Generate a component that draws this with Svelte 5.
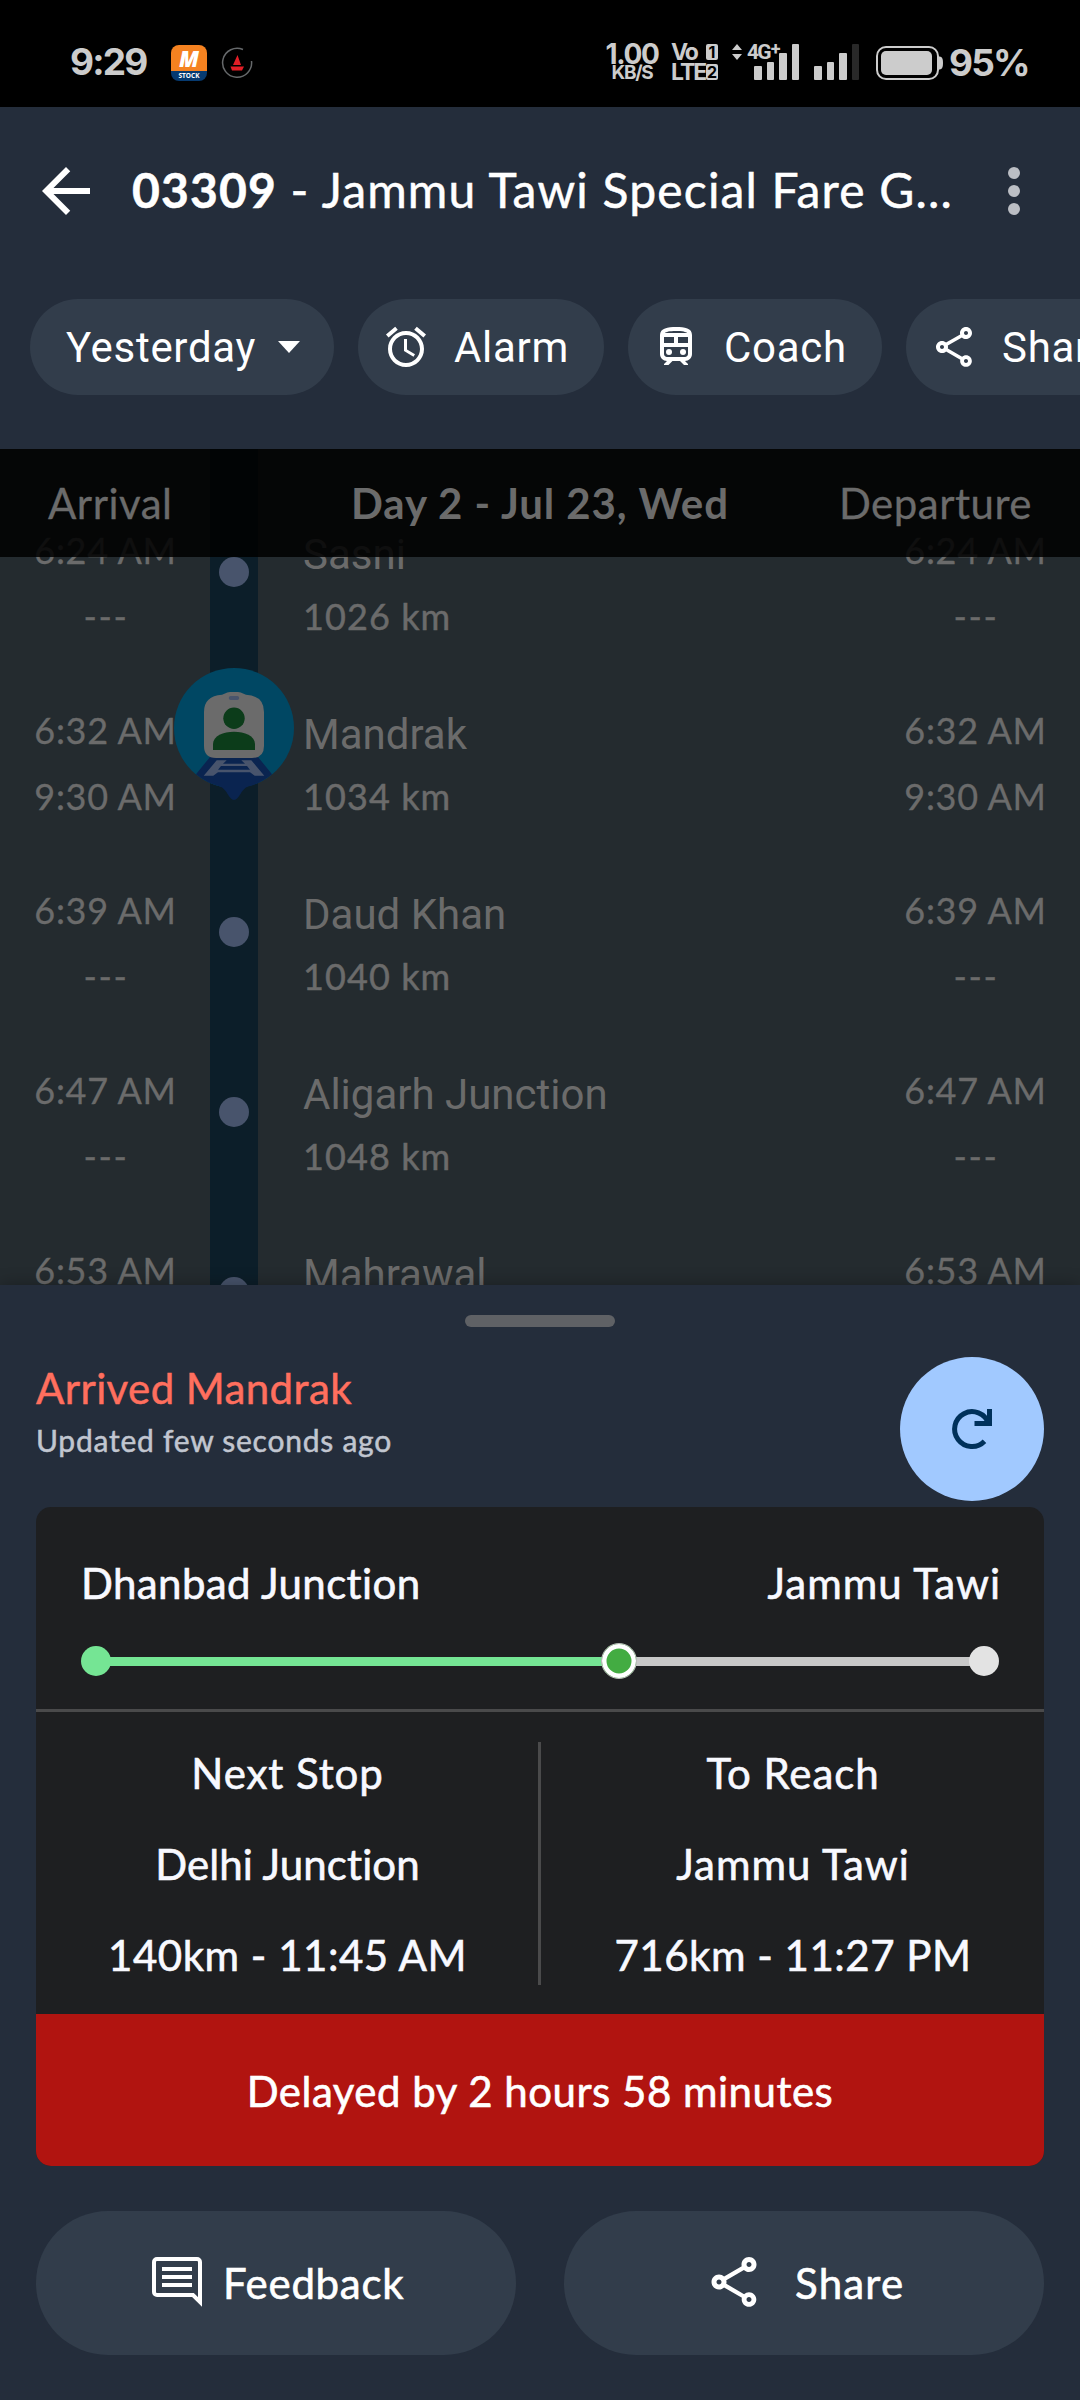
<script lang="ts">
	type Stop = {
		name: string;
		km: number;
		scheduled: string;
		actual: string;
		current?: boolean;
	};

	let stops = $state<Stop[]>([
		{ name: 'Sasni', km: 1026, scheduled: '6:24 AM', actual: '---' },
		{ name: 'Mandrak', km: 1034, scheduled: '6:32 AM', actual: '9:30 AM', current: true },
		{ name: 'Daud Khan', km: 1040, scheduled: '6:39 AM', actual: '---' },
		{ name: 'Aligarh Junction', km: 1048, scheduled: '6:47 AM', actual: '---' },
		{ name: 'Mahrawal', km: 1056, scheduled: '6:53 AM', actual: '---' }
	]);

	let progress = $state(58.95);
	const strengths = [14, 18, 27, 36];
</script>

{#snippet shareIcon(size: number)}
	<svg width={size} height={size} viewBox="0 0 24 24" fill="#fff">
		<path
			d="M18 16.08c-.76 0-1.44.3-1.96.77L8.91 12.7c.05-.23.09-.46.09-.7s-.04-.47-.09-.7l7.05-4.11c.54.5 1.25.81 2.04.81 1.66 0 3-1.34 3-3s-1.34-3-3-3-3 1.34-3 3c0 .24.04.47.09.7L8.04 9.81C7.5 9.31 6.79 9 6 9c-1.66 0-3 1.34-3 3s1.34 3 3 3c.79 0 1.5-.31 2.04-.81l7.12 4.16c-.05.21-.08.43-.08.65 0 1.61 1.31 2.92 2.92 2.92s2.92-1.31 2.92-2.92-1.31-2.92-2.92-2.92zM18 4c.55 0 1 .45 1 1s-.45 1-1 1-1-.45-1-1 .45-1 1-1zM6 13c-.55 0-1-.45-1-1s.45-1 1-1 1 .45 1 1-.45 1-1 1zm12 7.02c-.55 0-1-.45-1-1s.45-1 1-1 1 .45 1 1-.45 1-1 1z"
		/>
	</svg>
{/snippet}

{#snippet bars(lit: number)}
	<div class="bars">
		{#each strengths as h, i}
			<i class:off={i >= lit} style="height: {h}px"></i>
		{/each}
	</div>
{/snippet}

<main>
	<div class="status">
		<span class="clock">9:29</span>
		<div class="stock">
			<b>M</b>
			<small>STOCK</small>
		</div>
		<svg class="boat" width="32" height="32" viewBox="0 0 32 32">
			<path
				d="M22 2.5A14.5 14.5 0 1 0 30.5 14"
				fill="none"
				stroke="#66696b"
				stroke-width="1.5"
			/>
			<path d="M16.5 8 20 18h-8zM9.5 19.5h13.5l-2 4H11z" fill="#e31e26" />
		</svg>
		<div class="speed">
			<b>1.00</b>
			<small>KB/S</small>
		</div>
		<div class="volte">
			<div><b>Vo</b><em>1</em></div>
			<div><b>LTE</b><em>2</em></div>
		</div>
		<div class="mobile">
			<div class="network">
				<svg width="10" height="16" viewBox="0 0 10 16" fill="#ccc">
					<path d="M5 0l5 6H0zM5 16l5-6H0z" />
				</svg>
				<span>4G<sup>+</sup></span>
			</div>
			{@render bars(4)}
		</div>
		{@render bars(3)}
		<svg class="battery" width="68" height="34" viewBox="0 0 68 34">
			<rect x="1" y="1" width="61" height="32" rx="9" fill="none" stroke="#ccc" stroke-width="2" />
			<rect x="5" y="5" width="51" height="24" rx="5" fill="#ccc" />
			<path d="M63 10.5c3 0 4 2 4 6.500s-1 6.500-4 6.500z" fill="#ccc" />
		</svg>
		<span class="percent">95%</span>
	</div>

	<header>
		<div class="toolbar">
			<svg width="72" height="72" viewBox="0 0 24 24" fill="#fff">
				<path d="M20 11H7.83l5.59-5.59L12 4l-8 8 8 8 1.41-1.41L7.83 13H20v-2z" />
			</svg>
			<h1><b>03309</b> - Jammu Tawi Special Fare G...</h1>
			<svg width="72" height="72" viewBox="0 0 24 24" fill="#bbbec4">
				<circle cx="12" cy="6" r="2" />
				<circle cx="12" cy="12" r="2" />
				<circle cx="12" cy="18" r="2" />
			</svg>
		</div>

		<div class="chips">
			<button class="chip day">
				Yesterday
				<svg width="22" height="12" viewBox="0 0 22 12" fill="#fff"><path d="M0 0h22L11 12z" /></svg>
			</button>
			<button class="chip alarm">
				<svg width="48" height="48" viewBox="0 0 24 24" fill="#fff">
					<path
						d="M22 5.72l-4.6-3.86-1.29 1.53 4.6 3.86L22 5.72zM7.88 3.39L6.6 1.86 2 5.71l1.29 1.53 4.59-3.85zM12.5 8H11v6l4.75 2.85.75-1.23-4-2.37V8zM12 4c-4.97 0-9 4.03-9 9s4.02 9 9 9c4.97 0 9-4.03 9-9s-4.03-9-9-9zm0 16c-3.87 0-7-3.13-7-7s3.13-7 7-7 7 3.13 7 7-3.13 7-7 7z"
					/>
				</svg>
				Alarm
			</button>
			<button class="chip coach">
				<svg width="48" height="48" viewBox="0 0 24 24" fill="#fff">
					<path
						d="M12 2c-4 0-8 .5-8 4v9.5C4 17.43 5.57 19 7.5 19L6 20.5v.5h2.23l2-2H14l2 2h2v-.5L16.5 19c1.93 0 3.5-1.57 3.5-3.5V6c0-3.5-3.58-4-8-4zm0 2c3.51 0 4.96.48 5.57 1H6.43c.61-.52 2.06-1 5.57-1zM6 7h5v3H6V7zm12 8.5c0 .83-.67 1.5-1.5 1.5h-9c-.83 0-1.5-.67-1.5-1.5V12h12v3.5zM18 10h-5V7h5v3z"
					/>
					<circle cx="8.5" cy="14.5" r="1.5" />
					<circle cx="15.5" cy="14.5" r="1.5" />
				</svg>
				Coach
			</button>
			<button class="chip">
				{@render shareIcon(48)}
				Share
			</button>
		</div>
	</header>

	<section class="timeline">
		{#each stops as stop}
			<div class="stop">
				<div class="times">
					<span>{stop.scheduled}</span>
					<span class:dash={stop.actual === '---'}>{stop.actual}</span>
				</div>
				<div class="rail">
					{#if stop.current}
						<svg class="marker" width="120" height="132" viewBox="0 0 120 132">
							<circle cx="60" cy="60" r="60" fill="#004763" />
							<path
								d="M36 89H84L98 106.3A60 60 0 0 1 74 118.5C67 121 65 132 60 132S53 121 46 118.5A60 60 0 0 1 22 106.3z"
								fill="#0a2450"
							/>
							<path
								d="M42.7 92.3H52.7L49 95.7H71L67.3 92.3H77.3L90.3 107.7H80.7L76 104.3H44L39.3 107.7H29.7zM47 98L44 101.7H76L73 98z"
								fill="#48546c"
								fill-rule="evenodd"
							/>
							<path
								d="M51 25.5Q53 24 56 24H64Q67 24 69 25.5L72 26.8Q90 28 90 44V78Q90 90 78 90H42Q30 90 30 78V44Q30 28 48 26.8z"
								fill="#6b6b6b"
							/>
							<rect x="54.8" y="28" width="10.4" height="4" rx="2" fill="#48546c" />
							<circle cx="60" cy="50.3" r="10.7" fill="#0c3c1a" />
							<path d="M39 82V76C39 59.5 81 59.5 81 76V82z" fill="#0c3c1a" />
						</svg>
					{:else}
						<i class="dot"></i>
					{/if}
				</div>
				<div class="station">
					<span class="name">{stop.name}</span>
					<span class="km">{stop.km} km</span>
				</div>
				<div class="times">
					<span>{stop.scheduled}</span>
					<span class:dash={stop.actual === '---'}>{stop.actual}</span>
				</div>
			</div>
		{/each}

		<div class="columns">
			<span class="arrival">Arrival</span>
			<b>Day 2 - Jul 23, Wed</b>
			<span class="departure">Departure</span>
		</div>
	</section>

	<section class="sheet">
		<div class="handle"></div>

		<div class="summary">
			<div>
				<h2>Arrived Mandrak</h2>
				<p>Updated few seconds ago</p>
			</div>
			<button class="refresh" aria-label="Refresh">
				<svg width="60" height="60" viewBox="0 0 60 60" fill="none" stroke="#00315b" stroke-width="5">
					<path d="M42.5 42.2A17.4 17.4 0 1 1 46.5 24.5" />
					<path d="M47.5 10V24.5H32.5" />
				</svg>
			</button>
		</div>

		<div class="card">
			<div class="route">
				<span class="from">Dhanbad Junction</span>
				<span class="to">Jammu Tawi</span>
			</div>
			<div class="track">
				<i class="line done" style="width: {progress}%"></i>
				<i class="line"></i>
				<i class="end start"></i>
				<i class="thumb" style="left: {progress}%"></i>
				<i class="end finish"></i>
			</div>
			<div class="stats">
				<div>
					<span class="label">Next Stop</span>
					<span class="next">Delhi Junction</span>
					<span>140km - 11:45 AM</span>
				</div>
				<i></i>
				<div>
					<span class="label">To Reach</span>
					<span class="to">Jammu Tawi</span>
					<span>716km - 11:27 PM</span>
				</div>
			</div>
			<div class="delay">Delayed by 2 hours 58 minutes</div>
		</div>

		<div class="actions">
			<button class="feedback">
				<svg width="50" height="50" viewBox="0 0 50 50" fill="none" stroke="#fff" stroke-width="4">
					<path d="M2 5a3 3 0 0 1 3-3h40a3 3 0 0 1 3 3v40l-7-7H5a3 3 0 0 1-3-3z" />
					<path d="M10 12h30M10 20h30M10 28h30" />
				</svg>
				Feedback
			</button>
			<button class="share">
				{@render shareIcon(60)}
				Share
			</button>
		</div>
	</section>
</main>

<style>
	:global(body) {
		background: #242d3b;
	}

	main {
		width: 1080px;
		height: 2400px;
		overflow: hidden;
		display: flex;
		flex-direction: column;
		background: #242d3b;
		color: #fff;
		font-family: Lato, 'Noto Sans', sans-serif;
		font-size: 42px;
		white-space: nowrap;
	}

	h1,
	h2,
	p {
		margin: 0;
		font-weight: 400;
	}

	i,
	em {
		font-style: normal;
	}

	svg {
		display: block;
		flex: none;
	}

	button {
		border: 0;
		padding: 0;
		color: #fff;
		font-family: inherit;
		font-size: 42px;
	}

	/* status bar */

	.status {
		flex: none;
		height: 107px;
		box-sizing: border-box;
		padding: 44px 0 0 70px;
		display: flex;
		align-items: flex-start;
		background: #000;
		color: #ccc;
		font-family: Inter, Roboto, sans-serif;
	}

	.clock {
		width: 101px;
		font-size: 37px;
		font-weight: 700;
		line-height: 36px;
		letter-spacing: -1.8px;
	}

	.stock {
		width: 36px;
		height: 36px;
		margin-top: 1px;
		border-radius: 8px;
		background: linear-gradient(#f58220 26px, #063a70 26px);
		color: #fff;
		text-align: center;
	}

	.stock b {
		display: block;
		font: italic 900 22px/27px 'Open Sans', sans-serif;
	}

	.stock small {
		display: block;
		font: 700 6.5px/8px 'Open Sans', sans-serif;
	}

	.boat {
		margin: 3px 0 0 14px;
	}

	.speed {
		width: 56px;
		margin-left: 351px;
		text-align: center;
	}

	.speed b {
		display: block;
		font-size: 28px;
		font-weight: 700;
		line-height: 20px;
		letter-spacing: -1.3px;
	}

	.speed small {
		display: block;
		font-size: 19px;
		font-weight: 700;
		line-height: 18px;
		letter-spacing: -1.3px;
	}

	.volte {
		width: 47px;
		margin-left: 11px;
	}

	.volte div {
		display: flex;
		justify-content: space-between;
		height: 20px;
		font-size: 23px;
		line-height: 17px;
		letter-spacing: -2px;
	}

	.volte em {
		width: 12px;
		height: 16px;
		border-radius: 2px;
		background: #ccc;
		color: #000;
		font-size: 16px;
		font-weight: 700;
		line-height: 16px;
		text-align: center;
		letter-spacing: 0;
	}

	.mobile {
		position: relative;
		width: 67px;
		margin-left: 14px;
		display: flex;
		justify-content: flex-end;
	}

	.network {
		position: absolute;
		left: 0;
		top: 0;
		display: flex;
		gap: 5px;
		font-family: Roboto, sans-serif;
		font-size: 21px;
		font-weight: 700;
		line-height: 17px;
		letter-spacing: -1.8px;
	}

	.network sup {
		font-size: 18px;
		line-height: 0;
		vertical-align: 4px;
		margin-left: 1px;
	}

	.bars {
		display: flex;
		align-items: flex-end;
		gap: 5px;
		height: 36px;
	}

	.bars i {
		width: 7.5px;
		border-radius: 1px;
		background: #ccc;
	}

	.bars .off {
		background: #292929;
	}

	.mobile + .bars {
		margin-left: 15px;
	}

	.battery {
		margin: 2px 0 0 17px;
	}

	.percent {
		margin-left: 5px;
		font-size: 37px;
		font-weight: 700;
		line-height: 38px;
		letter-spacing: -1.8px;
	}

	/* header */

	header {
		flex: none;
		height: 342px;
	}

	.toolbar {
		display: flex;
		align-items: center;
		padding: 48px 30px 0;
	}

	h1 {
		width: 846px;
		margin-left: 30px;
		font-size: 48px;
		line-height: 66px;
		margin-bottom: 2px;
		letter-spacing: 1.18px;
		-webkit-text-stroke: 0.5px;
	}

	.chips {
		display: flex;
		gap: 24px;
		margin: 72px 0 0 30px;
	}

	.chip {
		flex: none;
		box-sizing: border-box;
		height: 96px;
		width: 254px;
		padding-left: 24px;
		border-radius: 48px;
		background: #323d4b;
		display: flex;
		align-items: center;
		gap: 24px;
		font-family: Roboto, sans-serif;
		letter-spacing: 0.7px;
	}

	.day {
		width: 304px;
		padding-left: 36px;
		gap: 22px;
	}

	.alarm {
		width: 246px;
	}

	/* stop list */

	.timeline {
		position: relative;
		flex: none;
		height: 836px;
		box-sizing: border-box;
		padding-top: 54px;
		overflow: hidden;
		color: #6b6b6b;
		background: linear-gradient(90deg, #242b2f 210px, #0c1e29 210px, #0c1e29 258px, #242b2f 258px);
	}

	.stop {
		display: grid;
		grid-template-columns: 210px 48px 1fr 210px;
		height: 180px;
	}

	.times {
		display: flex;
		flex-direction: column;
		align-items: center;
		padding: 14px 0 0 1px;
		font-size: 36px;
		line-height: 66px;
		letter-spacing: 0.7px;
		-webkit-text-stroke: 0.3px;
	}

	.times .dash {
		padding-left: 1px;
		letter-spacing: 1.7px;
	}

	.rail {
		position: relative;
		display: flex;
		justify-content: center;
		align-items: flex-start;
	}

	.dot {
		width: 30px;
		height: 30px;
		margin-top: 54px;
		border-radius: 50%;
		background: #48546c;
	}

	.marker {
		position: absolute;
		top: -15px;
		left: -36px;
	}

	.station {
		display: flex;
		flex-direction: column;
		padding: 22px 0 0 45px;
		line-height: 60px;
	}

	.name {
		font-family: Roboto, sans-serif;
	}

	.km {
		padding-top: 1px;
		font-size: 36px;
		letter-spacing: 1.1px;
		-webkit-text-stroke: 0.5px;
	}

	.columns {
		position: absolute;
		inset: 0 0 auto;
		height: 108px;
		box-sizing: border-box;
		padding: 0 48px;
		display: grid;
		grid-template-columns: 1fr auto 1fr;
		background: rgba(0, 0, 0, 0.86);
		line-height: 108px;
		letter-spacing: 0.5px;
		-webkit-text-stroke: 0.3px;
	}

	.columns b {
		letter-spacing: 0.9px;
		-webkit-text-stroke: 0;
	}

	.departure {
		text-align: right;
	}

	/* bottom sheet */

	.sheet {
		position: relative;
		flex: 1;
		background: #242d3b;
		box-shadow: 0 0 16px rgba(0, 0, 0, 0.3);
	}

	.handle {
		width: 150px;
		height: 12px;
		margin: 30px auto;
		border-radius: 6px;
		background: #5f6165;
	}

	.summary {
		display: flex;
		justify-content: space-between;
		padding: 0 36px;
	}

	h2 {
		margin-top: 6px;
		color: #ff6f5e;
		font-size: 42px;
		line-height: 50px;
		letter-spacing: 0.4px;
		-webkit-text-stroke: 0.5px;
	}

	p {
		color: #c1c6d0;
		font-size: 30px;
		line-height: 55px;
		letter-spacing: 0.75px;
		-webkit-text-stroke: 0.5px;
	}

	.refresh {
		width: 144px;
		height: 144px;
		border-radius: 50%;
		background: #a1c9ff;
		display: grid;
		place-items: center;
	}

	.card {
		height: 659px;
		margin: 6px 36px 0;
		border-radius: 15px;
		overflow: hidden;
		background: #1e1f21;
		color: #f8f9ff;
		-webkit-text-stroke: 0.6px;
		letter-spacing: 0.5px;
	}

	.from {
		letter-spacing: 0.4px;
	}

	.next {
		letter-spacing: 0.1px;
	}

	.to {
		letter-spacing: 1px;
	}

	.label {
		letter-spacing: 0.9px;
	}

	.route {
		display: flex;
		justify-content: space-between;
		padding: 46px 43px 0 45px;
		line-height: 60px;
	}

	.track {
		position: relative;
		display: flex;
		align-items: center;
		height: 36px;
		margin: 30px 60px 30px;
	}

	.line {
		flex: 1;
		height: 9px;
		background: #c8c8c8;
	}

	.line.done {
		flex: none;
		background: #75e594;
	}

	.end,
	.thumb {
		position: absolute;
		box-sizing: border-box;
		width: 30px;
		height: 30px;
		border-radius: 50%;
	}

	.start {
		left: -15px;
		background: #75e594;
	}

	.finish {
		right: -15px;
		background: #e3e3e3;
	}

	.thumb {
		width: 36px;
		height: 36px;
		margin-left: -18px;
		border: 1.5px solid #bdbdbd;
		background: #43ac42;
		box-shadow: inset 0 0 0 4.5px #fff;
	}

	.stats {
		display: grid;
		grid-template-columns: 502px 3px 1fr;
		height: 302px;
		border-top: 3px solid #4a4a4b;
		text-align: center;
		line-height: 91px;
	}

	.stats div {
		display: flex;
		flex-direction: column;
		padding: 16px 0 0 1px;
	}

	.stats > i {
		margin: 30px 0 29px;
		background: #4a4a4b;
	}

	.delay {
		height: 152px;
		background: #b11410;
		color: #fff;
		line-height: 154px;
		text-align: center;
	}

	.actions {
		display: grid;
		grid-template-columns: 1fr 1fr;
		gap: 48px;
		padding: 45px 36px 0;
	}

	.actions button {
		height: 144px;
		border-radius: 72px;
		background: #323d4b;
		display: flex;
		align-items: center;
		letter-spacing: 0.7px;
		-webkit-text-stroke: 0.6px;
	}

	.actions svg {
		margin-bottom: 2px;
	}

	.feedback {
		padding-left: 116px;
		gap: 21px;
	}

	.actions .share {
		padding-left: 140px;
		gap: 31px;
		letter-spacing: 1.2px;
	}
</style>
